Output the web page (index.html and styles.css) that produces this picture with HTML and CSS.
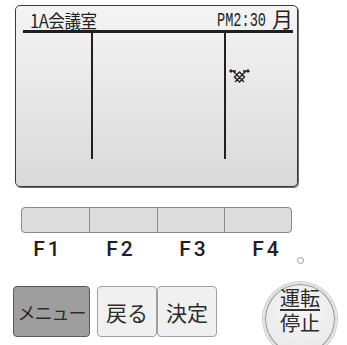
FILE: index.html
```html
<!DOCTYPE html>
<html lang="ja">
<head>
    <meta charset="UTF-8">
    <title>リモコン</title>
    <link rel="stylesheet" href="styles.css">
</head>
<body>
    <div class="panel">
        <div class="screen">
            <div class="screen-head">
                <span class="room">1A会議室</span>
                <span class="clock"><span class="time">PM2:30</span><span class="day">月</span></span>
            </div>
            <div class="screen-body">
                <div class="col col-left"></div>
                <div class="col col-mid"></div>
                <div class="col col-right">
                    <svg class="fan" width="21" height="17" viewBox="0 0 21 17">
                        <path d="M1 3h6M14 3h6M2.5 1.5L1 3l1.5 1.5M18.5 1.5L20 3l-1.5 1.5" />
                        <path d="M4 3l11 11M17 3L6 14M10.5 4l5 5-5 5-5-5z" />
                    </svg>
                </div>
            </div>
        </div>

        <div class="fkeys">
            <div class="fkey"></div>
            <div class="fkey"></div>
            <div class="fkey"></div>
            <div class="fkey"></div>
        </div>
        <div class="flabels">
            <span>F1</span>
            <span>F2</span>
            <span>F3</span>
            <span>F4</span>
        </div>

        <div class="bottom">
            <div class="btns">
                <button class="btn btn-menu">メニュー</button>
                <button class="btn btn-light">戻る</button>
                <button class="btn btn-light">決定</button>
            </div>
            <div class="power-col">
                <div class="led"></div>
                <button class="power">
                    <span class="power-top">運転</span>
                    <span class="power-bottom">停止</span>
                </button>
            </div>
        </div>
    </div>
</body>
</html>
```

FILE: styles.css
```css
body {
    margin: 0;
    background: #fff;
    font-family: "Noto Sans CJK JP", "Noto Sans", sans-serif;
    color: #231f20;
    overflow: hidden;
}

.panel {
    width: 347px;
    height: 345px;
    padding-top: 5px;
    box-sizing: border-box;
}

.screen {
    margin-left: 15px;
    width: 283px;
    height: 182px;
    box-sizing: border-box;
    border: 1px solid #3a3a3a;
    border-radius: 5px;
    background: linear-gradient(#f4f4f4, #d9d9d9);
    box-shadow: 1px 1px 0 #6a6a6a;
    padding: 0 4px 0 7px;
}

.screen-head {
    display: flex;
    justify-content: space-between;
    align-items: flex-end;
    height: 24px;
    border-bottom: 3px solid #231f20;
    padding-left: 7px;
}

.room {
    font-size: 18px;
    line-height: 20px;
    letter-spacing: -0.5px;
    transform: scaleX(0.92);
    transform-origin: left bottom;
}

.clock {
    display: flex;
    align-items: flex-end;
    gap: 6px;
}

.time {
    font-family: "Liberation Mono", monospace;
    font-size: 20px;
    line-height: 19px;
    transform: scaleX(0.68);
    transform-origin: right bottom;
    margin-left: -24px;
}

.day {
    font-size: 21px;
    line-height: 23px;
}

.screen-body {
    display: flex;
    height: 126px;
    margin-left: -7px;
}

.col-left {
    width: 75px;
}

.col-mid {
    width: 131px;
    border-left: 2px solid #231f20;
    border-right: 2px solid #231f20;
}

.col-right {
    flex: 1;
    padding: 35px 0 0 3px;
}

.fan {
    display: block;
    fill: none;
    stroke: #231f20;
    stroke-width: 1.4;
}

.fkeys {
    display: grid;
    grid-template-columns: repeat(4, 1fr);
    margin: 20px 0 0 21px;
    width: 271px;
    height: 26px;
    box-sizing: border-box;
    border: 1px solid #8a8a8a;
    border-radius: 4px;
    background: #dcdcdc;
}

.fkey + .fkey {
    border-left: 1px solid #8a8a8a;
}

.flabels {
    display: grid;
    grid-template-columns: repeat(4, 73px);
    margin: 6px 0 0 10px;
    height: 20px;
    font-family: Roboto, "Liberation Sans", sans-serif;
    font-weight: 500;
    font-size: 21px;
    line-height: 20px;
    letter-spacing: 3px;
    text-indent: 3px;
    text-align: center;
}

.bottom {
    display: flex;
    align-items: flex-start;
}

.btns {
    display: flex;
    margin: 27px 0 0 13px;
}

.btn {
    height: 51px;
    box-sizing: border-box;
    border-radius: 4px;
    font-family: "Noto Sans CJK JP", sans-serif;
    color: #2b2b2b;
    padding: 0;
}

.btn-menu {
    width: 77px;
    background: #9e9e9e;
    border: 1px solid #5a5a5a;
    font-size: 18px;
    letter-spacing: -1px;
    margin-right: 7px;
}

.btn-light {
    width: 60px;
    background: #f0f0f0;
    border: 1px solid #a0a0a0;
    font-size: 21px;
}

.power-col {
    display: flex;
    flex-direction: column;
    align-items: center;
    margin-left: 46px;
}

.led {
    width: 7px;
    height: 7px;
    margin-top: -2px;
    box-sizing: border-box;
    border: 1px solid #9a9a9a;
    border-radius: 50%;
    background: #fff;
}

.power {
    margin-top: 18px;
    width: 74px;
    height: 74px;
    border-radius: 50%;
    border: 2px solid #e2e2e2;
    background: radial-gradient(circle at 50% 40%, #f6f6f6, #e6e6e6);
    box-shadow: inset 0 0 0 1px #8c8c8c, 0 0 0 1px #c8c8c8;
    display: flex;
    flex-direction: column;
    align-items: center;
    justify-content: flex-start;
    padding: 3px 0 0;
    font-family: "Noto Sans CJK JP", sans-serif;
    font-size: 20px;
    color: #2b2b2b;
}

.power-top {
    line-height: 22px;
    border-bottom: 2px solid #333;
}

.power-bottom {
    line-height: 24px;
}
```
